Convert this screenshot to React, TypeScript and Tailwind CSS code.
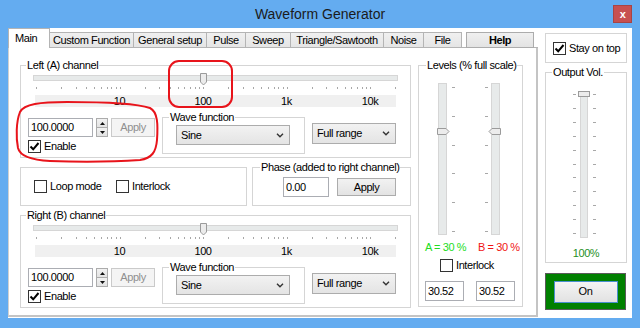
import type { ReactNode } from "react";

const DECADE = 83.5;
const tickX = (v: number) => 3 + DECADE * Math.log10(v);

const TICK_VALUES: number[] = (() => {
  const out: number[] = [];
  for (let d = 1; d <= 1000; d *= 10) for (let k = 1; k <= 9; k++) out.push(k * d);
  out.push(10000, 20000);
  return out;
})();

const TABS = [
  { label: "Custom Function", w: "w-[84px]" },
  { label: "General setup", w: "w-[73px]" },
  { label: "Pulse", w: "w-[39px]" },
  { label: "Sweep", w: "w-[45px]" },
  { label: "Triangle/Sawtooth", w: "w-[93px]" },
  { label: "Noise", w: "w-[40px]" },
  { label: "File", w: "w-[38px]" },
];

function Edit({ value, className }: { value: string; className?: string }) {
  return (
    <div className={`flex items-center border border-[#abadb3] bg-white pl-[2px] ${className ?? ""}`}>
      {value}
    </div>
  );
}

function Button({ children, disabled, className }: { children: ReactNode; disabled?: boolean; className?: string }) {
  return (
    <div
      className={`flex items-center justify-center border ${
        disabled
          ? "border-[#cacaca] bg-[#f4f4f4] text-[#8f8f8f]"
          : "border-[#acacac] bg-linear-to-b from-[#f2f2f2] to-[#e3e3e3]"
      } ${className ?? ""}`}
    >
      {children}
    </div>
  );
}

function Spin() {
  return (
    <div className="ml-[3px] flex h-[19px] w-[12px] flex-col">
      <div className="flex h-[10px] items-center justify-center border border-[#acacac] bg-linear-to-b from-[#f2f2f2] to-[#e3e3e3]">
        <svg width="5" height="3" viewBox="0 0 5 3">
          <path d="M0 3 L2.5 0 L5 3 Z" fill="#111" />
        </svg>
      </div>
      <div className="-mt-px flex h-[10px] items-center justify-center border border-[#acacac] bg-linear-to-b from-[#f2f2f2] to-[#e3e3e3]">
        <svg width="5" height="3" viewBox="0 0 5 3">
          <path d="M0 0 L2.5 3 L5 0 Z" fill="#111" />
        </svg>
      </div>
    </div>
  );
}

function Check({ label, checked, className }: { label: string; checked?: boolean; className?: string }) {
  return (
    <div className={`flex items-center ${className ?? ""}`}>
      <span className="flex h-[13px] w-[13px] items-center justify-center border border-[#333333] bg-white">
        {checked && (
          <svg width="11" height="11" viewBox="0 0 11 11">
            <path d="M1.5 5.5 L4.2 8.3 L9.5 2" fill="none" stroke="#000" strokeWidth="2" />
          </svg>
        )}
      </span>
      <span className="ml-[3px] leading-[13px]">{label}</span>
    </div>
  );
}

function Select({ value, className }: { value: string; className?: string }) {
  return (
    <div
      className={`flex items-center justify-between border border-[#acacac] bg-linear-to-b from-[#f2f2f2] to-[#e4e4e4] pl-[4px] pr-[5px] ${className ?? ""}`}
    >
      <span>{value}</span>
      <svg width="8" height="5" viewBox="0 0 8 5">
        <path d="M1 0.8 L4 3.8 L7 0.8" fill="none" stroke="#333" strokeWidth="1.4" />
      </svg>
    </div>
  );
}

function HSlider({ value }: { value: number }) {
  const tx = tickX(value);
  return (
    <div className="ml-[5px] w-[365px]">
      <div className="relative h-[6px] border border-[#d6d6d6] bg-[#e7eaea]">
        <svg
          className="absolute top-[-3px]"
          style={{ left: Math.round(tx - 4.5) }}
          width="8"
          height="13"
          viewBox="0 0 8 13"
        >
          <path d="M0.5 0.5 H6.5 V9 L3.5 12 L0.5 9 Z" fill="#ececec" stroke="#9b9b9b" />
        </svg>
      </div>
      <svg className="mt-[6px] block" width="365" height="3">
        {TICK_VALUES.map((v) => (
          <rect key={v} x={Math.round(tickX(v))} y={0} width={1} height={2} fill="#a8a8a8" />
        ))}
      </svg>
      <div className="relative ml-[2px] mt-[5px] h-[12px] w-[361px] bg-[#f0f0f0]">
        {["10", "100", "1k", "10k"].map((l, i) => (
          <span
            key={l}
            className="absolute top-0 -translate-x-1/2 leading-[12px]"
            style={{ left: 1 + DECADE * (i + 1) }}
          >
            {l}
          </span>
        ))}
      </div>
    </div>
  );
}

function ChannelGroup({ label }: { label: string }) {
  return (
    <fieldset className="h-[99px] min-w-0 border border-[#d5d5d5]">
      <legend className="ml-[5px] px-[1px] leading-[13px]">{label}</legend>
      <div className="pl-[7px] pt-[3px]">
        <HSlider value={100} />
        <div className="mt-[4px] flex items-start">
          <div className="flex flex-col pt-[7px]">
            <div className="flex items-center">
              <Edit value="100.0000" className="h-[19px] w-[65px]" />
              <Spin />
              <Button disabled className="ml-[3px] h-[19px] w-[44px]">
                Apply
              </Button>
            </div>
            <Check checked label="Enable" className="mt-[3px]" />
          </div>
          <fieldset className="ml-[7px] h-[43px] w-[143px] min-w-0 border border-[#d5d5d5]">
            <legend className="ml-[6px] px-[1px] leading-[13px]">Wave function</legend>
            <Select value="Sine" className="ml-[13px] mt-[1px] h-[20px] w-[114px]" />
          </fieldset>
          <Select value="Full range" className="ml-[7px] mt-[12px] h-[21px] w-[84px]" />
        </div>
      </div>
    </fieldset>
  );
}

function LevelSliders() {
  const ticks = [0, 1, 2, 3, 4, 5].map((i) => Math.round(6 + 28.8 * i));
  return (
    <svg className="ml-[17px] mt-[9px] block" width="68" height="156" viewBox="0 0 68 156">
      <rect x="2.5" y="2.5" width="8" height="151" fill="#e7eaea" stroke="#d6d6d6" />
      <rect x="55.5" y="2.5" width="8" height="151" fill="#e7eaea" stroke="#d6d6d6" />
      {ticks.map((y) => (
        <g key={y}>
          <rect x="16" y={y} width="3" height="1" fill="#a8a8a8" />
          <rect x="49" y={y} width="3" height="1" fill="#a8a8a8" />
        </g>
      ))}
      <path d="M1.5 47.5 H10 L13 50.5 L10 53.5 H1.5 Z" fill="#ececec" stroke="#9b9b9b" />
      <path d="M64.5 47.5 H56 L53 50.5 L56 53.5 H64.5 Z" fill="#ececec" stroke="#9b9b9b" />
    </svg>
  );
}

function OutputSlider() {
  const ticks = Array.from({ length: 11 }, (_, i) => Math.round(4 + 13.9 * i));
  return (
    <svg className="ml-[26px] mt-[11px] block" width="25" height="149" viewBox="0 0 25 149">
      <rect x="8.5" y="2.5" width="7" height="145" fill="#e7eaea" stroke="#d6d6d6" />
      {ticks.map((y) => (
        <g key={y}>
          <rect x="1" y={y} width="3" height="1" fill="#a8a8a8" />
          <rect x="21" y={y} width="3" height="1" fill="#a8a8a8" />
        </g>
      ))}
      <rect x="6.5" y="1.5" width="11" height="5" fill="#ececec" stroke="#9b9b9b" />
    </svg>
  );
}

export default function App() {
  return (
    <div className="relative flex h-[328px] w-[640px] flex-col bg-[#64acf0] font-['Liberation_Sans',Arial,sans-serif] text-[11px] tracking-[-0.4px] text-black">
      {/* title bar */}
      <div className="relative flex h-[28px] items-center justify-center">
        <span className="text-[14px] tracking-normal text-[#1b1b1b]">Waveform Generator</span>
        <div className="absolute right-[8px] top-[5px] flex h-[18px] w-[19px] items-center justify-center border border-[#a84444] bg-[#c75050] text-[11px] font-bold leading-none text-white">
          x
        </div>
      </div>

      {/* client area */}
      <div className="mx-[8px] flex h-[290px] bg-white">
        {/* tab control */}
        <div className="flex w-[530px] flex-col">
          <div className="flex h-[20px] items-end">
            <div className="flex h-[20px] w-[42px] items-center border-l border-r border-t border-[#b4b4b4] bg-white pl-[6px]">
              Main
            </div>
            {TABS.map((t) => (
              <div
                key={t.label}
                className={`flex h-[16px] items-center justify-center border-b border-r border-t border-[#b4b4b4] bg-linear-to-b from-[#f0f0f0] to-[#e5e5e5] ${t.w}`}
              >
                {t.label}
              </div>
            ))}
            <div className="h-px w-[4px] self-end bg-[#b4b4b4]" />
            <div className="flex h-[16px] w-[68px] items-center justify-center border border-[#acacac] bg-linear-to-b from-[#f0f0f0] to-[#e3e3e3] font-bold">
              Help
            </div>
            <div className="h-px flex-1 self-end bg-[#b4b4b4]" />
          </div>

          <div className="flex h-[269px] border-b-2 border-l border-r-2 border-b-[#c4c4c4] border-l-[#d0d0d0] border-r-[#c4c4c4] bg-white pl-[11px] pt-[11px]">
            <div className="flex w-[391px] flex-col">
              <ChannelGroup label="Left (A) channel" />
              <div className="mt-[3px] flex h-[45px]">
                <div className="mt-[6px] flex h-[39px] w-[227px] items-center border border-[#d5d5d5] pl-[13px]">
                  <Check label="Loop mode" className="w-[82px]" />
                  <Check label="Interlock" />
                </div>
                <fieldset className="ml-[5px] h-[45px] w-[159px] min-w-0 border border-[#d5d5d5]">
                  <legend className="ml-[7px] px-[1px] leading-[13px]">Phase (added to right channel)</legend>
                  <div className="flex items-center pl-[30px] pt-[3px]">
                    <Edit value="0.00" className="h-[20px] w-[46px]" />
                    <Button className="ml-[8px] h-[18px] w-[59px]">Apply</Button>
                  </div>
                </fieldset>
              </div>
              <div className="mt-[3px]">
                <ChannelGroup label="Right (B) channel" />
              </div>
            </div>

            <fieldset className="ml-[7px] h-[248px] w-[105px] min-w-0 border border-[#d5d5d5]">
              <legend className="ml-[7px] px-[1px] leading-[13px]">Levels (% full scale)</legend>
              <LevelSliders />
              <div className="mt-[4px] flex h-[13px] items-center pl-[6px] leading-[13px]">
                <span className="w-[53px] text-[#22dd22]">A = 30 %</span>
                <span className="text-[#f01414]">B = 30 %</span>
              </div>
              <Check label="Interlock" className="ml-[21px] mt-[5px]" />
              <div className="mt-[9px] flex gap-[12px] pl-[6px]">
                <Edit value="30.52" className="h-[20px] w-[39px]" />
                <Edit value="30.52" className="h-[20px] w-[39px]" />
              </div>
            </fieldset>
          </div>
        </div>

        {/* right column */}
        <div className="flex w-[94px] flex-col pl-[7px] pt-[5px]">
          <div className="flex h-[30px] w-[82px] items-center border border-[#d5d5d5] pl-[7px]">
            <Check checked label="Stay on top" />
          </div>
          <fieldset className="mt-[3px] h-[197px] w-[82px] min-w-0 border border-[#d5d5d5]">
            <legend className="ml-[6px] px-[1px] leading-[13px]">Output Vol.</legend>
            <OutputSlider />
            <div className="mt-[8px] text-center leading-[13px] text-[#1f8f1f]">100%</div>
          </fieldset>
          <div className="mt-[10px] flex h-[37px] w-[81px] items-center justify-center border border-[#5a5a5a] bg-[#008000]">
            <div className="flex h-[22px] w-[64px] items-center justify-center border border-[#4a8fcf] bg-linear-to-b from-[#f4f4f4] to-[#e2e2e2]">
              On
            </div>
          </div>
        </div>
      </div>

      {/* red annotation marks */}
      <svg className="pointer-events-none absolute left-0 top-0" width="640" height="328" viewBox="0 0 640 328">
        <rect x="169" y="61" width="63" height="46" rx="10" fill="none" stroke="#e8141b" strokeWidth="2" />
        <path
          d="M20 112 C24 104, 40 102, 67 102 C100 102, 135 103, 150 108 C158 112, 158 125, 157 140 C156 152, 152 158, 140 160 C110 162, 80 162, 50 161 C30 160, 20 156, 18 148 C16 138, 16 122, 20 112 Z"
          fill="none"
          stroke="#e8141b"
          strokeWidth="2"
        />
      </svg>
    </div>
  );
}
